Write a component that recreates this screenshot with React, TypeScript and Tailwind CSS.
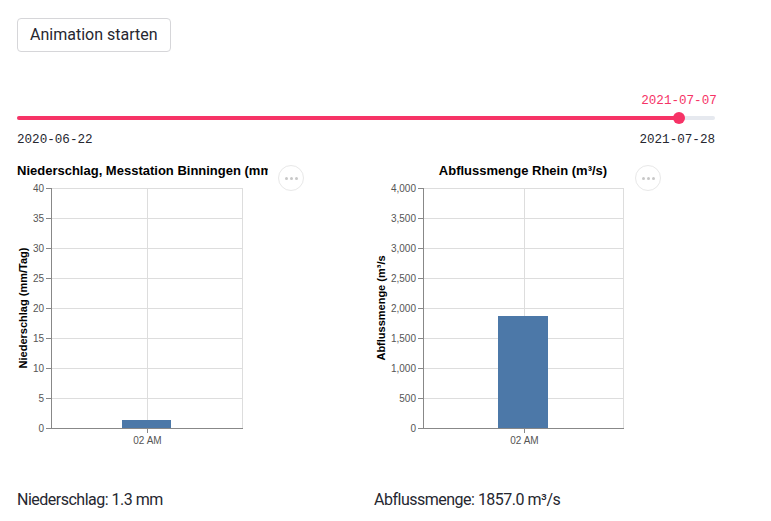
import React from "react";

const FONT = "'Roboto', 'Liberation Sans', sans-serif";
const MONO = "'Liberation Mono', 'DejaVu Sans Mono', monospace";
const CHART = "'Liberation Sans', Arial, sans-serif";

function MoreButton() {
  return (
    <div className="absolute left-[261px] top-[7px] w-[26px] h-[26px] rounded-full border border-[#e8e8e8] bg-white flex items-center justify-center gap-[2px]">
      <span className="w-[3px] h-[3px] rounded-full bg-[#c8c8c8]" />
      <span className="w-[3px] h-[3px] rounded-full bg-[#c8c8c8]" />
      <span className="w-[3px] h-[3px] rounded-full bg-[#c8c8c8]" />
    </div>
  );
}

type ChartProps = {
  id: string;
  title: string;
  titleX: number;
  titleAnchor: "start" | "middle";
  axisTitle: string;
  axisTitleX: number;
  plotX: number;
  plotW: number;
  ticks: string[];
  barX: number;
  barW: number;
  barH: number;
  gridX: number;
};

function Chart(p: ChartProps) {
  const top = 30;
  const h = 240;
  const step = h / (p.ticks.length - 1);
  return (
    <svg width={341} height={300} className="block" style={{ fontFamily: CHART }}>
      <defs>
        <clipPath id={p.id}>
          <rect x={0} y={0} width={251} height={30} />
        </clipPath>
      </defs>
      <text
        x={p.titleX}
        y={17}
        textAnchor={p.titleAnchor}
        fontSize={13}
        fontWeight="bold"
        fill="#000"
        clipPath={`url(#${p.id})`}
      >
        {p.title}
      </text>
      {p.ticks.map((t, i) => {
        const y = top + h - i * step;
        return (
          <g key={t}>
            <line x1={p.plotX} x2={p.plotX + p.plotW} y1={y + 0.5} y2={y + 0.5} stroke="#ddd" />
            <line x1={p.plotX - 5} x2={p.plotX} y1={y + 0.5} y2={y + 0.5} stroke="#888" />
            <text x={p.plotX - 7} y={y + 3.5} textAnchor="end" fontSize={10} fill="#555">
              {t}
            </text>
          </g>
        );
      })}
      <line x1={p.gridX + 0.5} x2={p.gridX + 0.5} y1={top} y2={top + h} stroke="#ddd" />
      <line x1={p.plotX + p.plotW + 0.5} x2={p.plotX + p.plotW + 0.5} y1={top} y2={top + h} stroke="#ddd" />
      <rect x={p.barX} y={top + h - p.barH} width={p.barW} height={p.barH} fill="#4c78a8" />
      <line x1={p.plotX + 0.5} x2={p.plotX + 0.5} y1={top} y2={top + h + 0.5} stroke="#888" />
      <line x1={p.plotX} x2={p.plotX + p.plotW + 1} y1={top + h + 0.5} y2={top + h + 0.5} stroke="#888" />
      <line x1={p.gridX + 0.5} x2={p.gridX + 0.5} y1={top + h} y2={top + h + 5} stroke="#888" />
      <text x={p.gridX + 0.5} y={top + h + 16} textAnchor="middle" fontSize={10} fill="#555">
        02 AM
      </text>
      <text
        transform={`translate(${p.axisTitleX}, ${top + h / 2}) rotate(-90)`}
        textAnchor="middle"
        fontSize={11}
        fontWeight="bold"
        fill="#000"
      >
        {p.axisTitle}
      </text>
    </svg>
  );
}

export default function App() {
  return (
    <div className="w-[771px] h-[521px] bg-white overflow-hidden px-[17px] pt-[18px] text-[#262730]" style={{ fontFamily: FONT }}>
      <button className="h-[34px] px-[12px] border border-[#d6d6d9] rounded-[4px] bg-white text-[16px] leading-none text-[#262730]">
        Animation starten
      </button>

      {/* slider */}
      <div className="w-[698px] mt-[41px]">
        <div className="relative h-[16px]" style={{ fontFamily: MONO }}>
          <span className="absolute left-[662px] -translate-x-1/2 top-0 whitespace-nowrap text-[12.6px] leading-[16px] text-[#f63366]">2021-07-07</span>
        </div>
        <div className="relative h-[12px] mt-[3px] flex items-center">
          <div className="w-full h-[4px] rounded-full bg-[#e6e9ef]">
            <div className="h-full w-[662px] rounded-full bg-[#f63366]" />
          </div>
          <div className="absolute left-[656px] top-0 w-[12px] h-[12px] rounded-full bg-[#f63366]" />
        </div>
        <div className="flex justify-between mt-[8px] text-[12.6px] leading-[16px] text-[#262730]" style={{ fontFamily: MONO }}>
          <span>2020-06-22</span>
          <span>2021-07-28</span>
        </div>
      </div>

      {/* charts */}
      <div className="flex gap-[16px] mt-[10px]">
        <div className="relative w-[341px]">
          <Chart
            id="c1"
            title="Niederschlag, Messtation Binningen (mm/Tag)"
            titleX={0}
            titleAnchor="start"
            axisTitle="Niederschlag (mm/Tag)"
            axisTitleX={10}
            plotX={34}
            plotW={191}
            ticks={["0", "5", "10", "15", "20", "25", "30", "35", "40"]}
            barX={105}
            barW={49}
            barH={8}
            gridX={130}
          />
          <MoreButton />
        </div>
        <div className="relative w-[341px]">
          <Chart
            id="c2"
            title="Abflussmenge Rhein (m³/s)"
            titleX={149}
            titleAnchor="middle"
            axisTitle="Abflussmenge (m³/s"
            axisTitleX={11}
            plotX={49}
            plotW={200}
            ticks={["0", "500", "1,000", "1,500", "2,000", "2,500", "3,000", "3,500", "4,000"]}
            barX={124}
            barW={50}
            barH={112}
            gridX={150}
          />
          <MoreButton />
        </div>
      </div>

      <div className="flex gap-[16px] mt-[32px] text-[16px] leading-[20px] tracking-[-0.5px] text-[#262730]">
        <div className="w-[341px]">Niederschlag: 1.3 mm</div>
        <div className="w-[341px]">Abflussmenge: 1857.0 m³/s</div>
      </div>
    </div>
  );
}
